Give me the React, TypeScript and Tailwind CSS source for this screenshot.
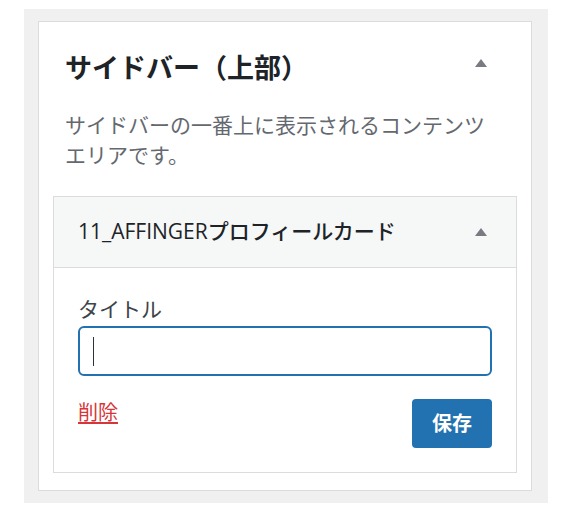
const Arrow = () => (
  <svg width="12" height="8" viewBox="0 0 12 8" className="shrink-0">
    <path d="M6 0 L12 8 L0 8 Z" fill="#787c82" />
  </svg>
);

export default function App() {
  return (
    <div
      className="min-h-[511px] bg-white px-[24px] pt-[9px]"
      style={{ fontFamily: '"Open Sans", "Noto Sans CJK JP", sans-serif' }}
    >
      <div className="bg-[#f0f0f1] pb-[12px] pl-[14px] pr-[16px] pt-[12px]">
        <div className="border border-[#dcdcde] bg-white px-[14px] pb-[17px] pt-[28px]">
          <div className="flex items-center justify-between pl-[12px] pr-[30px]">
            <h2 className="text-[27px] font-bold leading-[36px] text-[#1d2327]">
              サイドバー（上部）
            </h2>
            <div className="-mt-[10px]">
              <Arrow />
            </div>
          </div>
          <p className="mt-[24px] pl-[12px] text-[21px] leading-[30px] text-[#646970]">
            サイドバーの一番上に表示されるコンテンツ
            <br />
            エリアです。
          </p>

          <div className="mt-[26px] border border-[#dcdcde]">
            <div className="flex h-[71px] items-center justify-between border-b border-[#dcdcde] bg-[#f6f7f7] pl-[24px] pr-[29px]">
              <span className="text-[21px] font-medium text-[#1d2327]">
                11_AFFINGERプロフィールカード
              </span>
              <Arrow />
            </div>
            <div className="px-[24px] pb-[24px] pt-[29px]">
              <label className="block text-[21px] leading-[25px] text-[#3c434a]">タイトル</label>
              <div className="mt-[4px] flex h-[50px] items-center rounded-[6px] border-2 border-[#2271b1] px-[13px]">
                <span className="h-[29px] w-px bg-[#2c3338]" />
              </div>
              <div className="mt-[23px] flex items-start justify-between">
                <a className="text-[20px] leading-[28px] text-[#d63638] underline underline-offset-2">
                  削除
                </a>
                <button className="flex h-[49px] w-[80px] items-center justify-center rounded-[4px] bg-[#2271b1] text-[20px] font-bold text-white">
                  保存
                </button>
              </div>
            </div>
          </div>
        </div>
      </div>
    </div>
  );
}
